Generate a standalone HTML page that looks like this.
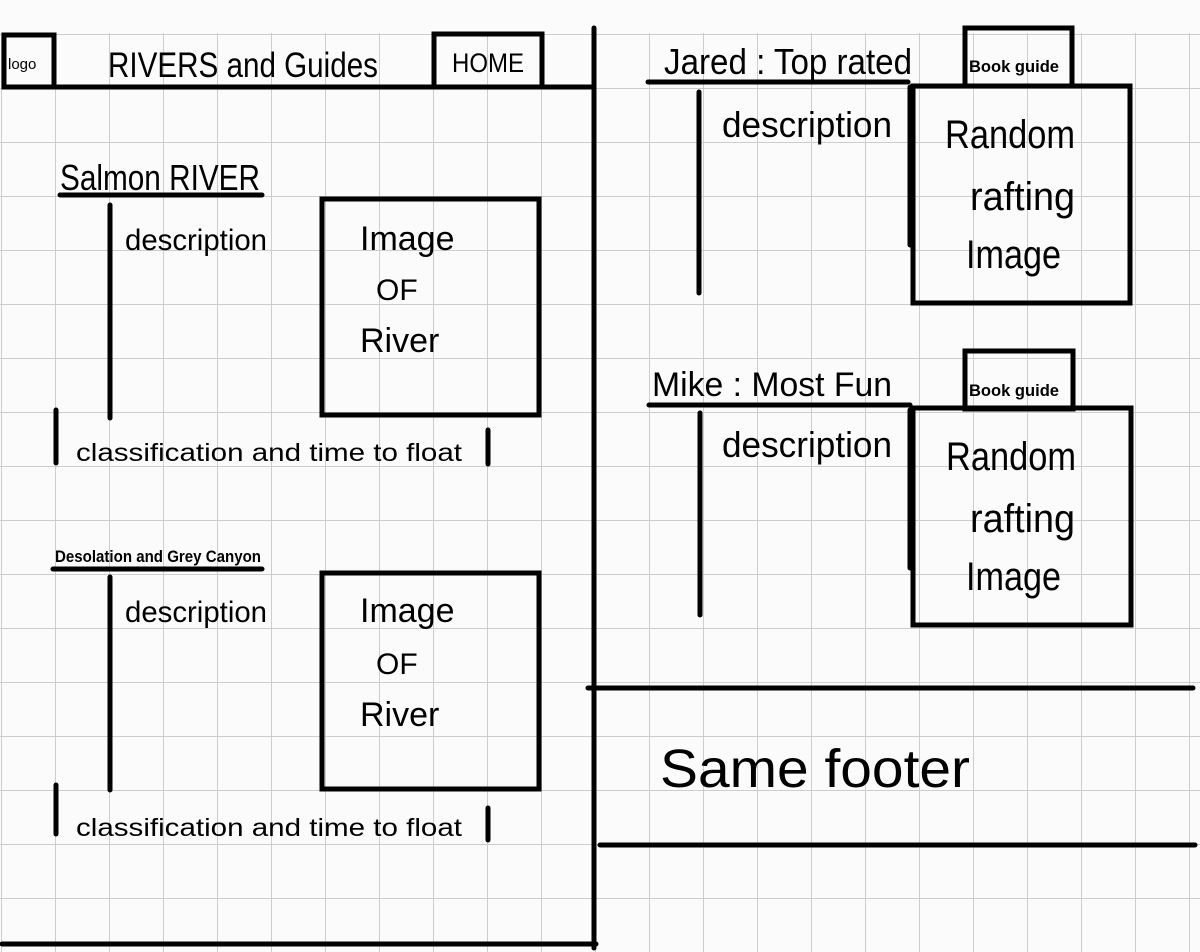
<!DOCTYPE html>
<html><head><meta charset="utf-8"><style>
html,body{margin:0;padding:0;background:#fbfbfb;}
svg{display:block}
text{font-family:"Liberation Sans",sans-serif;fill:#000;}
</style></head><body>
<svg width="1200" height="952" viewBox="0 0 1200 952" xmlns="http://www.w3.org/2000/svg">
<defs>
<pattern id="g" x="1" y="34" width="54" height="54" patternUnits="userSpaceOnUse">
<path d="M0 0V54M0 0H54" stroke="#cdcdcd" stroke-width="2" fill="none"/>
</pattern>
</defs>
<rect x="0" y="0" width="1200" height="952" fill="#fbfbfb"/>
<rect x="0" y="33" width="1200" height="919" fill="url(#g)"/>
<g stroke="#000" stroke-width="5" fill="none" stroke-linecap="round">
<!-- header -->
<rect x="4" y="35" width="50" height="52"/>
<line x1="54" y1="87" x2="593" y2="87"/>
<rect x="434" y="34" width="108" height="53"/>
<line x1="594" y1="28" x2="594" y2="948"/>
<line x1="2" y1="944" x2="596" y2="944"/>
<!-- salmon -->
<line x1="60" y1="195" x2="262" y2="195"/>
<line x1="110" y1="205" x2="110" y2="418"/>
<rect x="322" y="199" width="217" height="216"/>
<line x1="56" y1="410" x2="56" y2="463"/>
<line x1="488" y1="430" x2="488" y2="464"/>
<!-- desolation -->
<line x1="53" y1="569" x2="262" y2="569"/>
<line x1="110" y1="577" x2="110" y2="790"/>
<rect x="322" y="573" width="217" height="216"/>
<line x1="56" y1="785" x2="56" y2="834"/>
<line x1="488" y1="808" x2="488" y2="840"/>
<!-- jared -->
<line x1="648" y1="82" x2="908" y2="82"/>
<rect x="965" y="28" width="107" height="58"/>
<line x1="699" y1="92" x2="699" y2="293"/>
<line x1="910" y1="87" x2="910" y2="245"/>
<rect x="913" y="86" width="217" height="217"/>
<!-- mike -->
<line x1="649" y1="405" x2="910" y2="405"/>
<rect x="965" y="351" width="108" height="58"/>
<line x1="700" y1="413" x2="700" y2="615"/>
<line x1="910" y1="410" x2="910" y2="568"/>
<rect x="913" y="408" width="218" height="217"/>
<!-- footer -->
<line x1="588" y1="688" x2="1193" y2="688"/>
<line x1="600" y1="845" x2="1195" y2="845"/>
</g>
<text x="8" y="69" font-size="15">logo</text>
<text x="108" y="77" font-size="35" textLength="270" lengthAdjust="spacingAndGlyphs">RIVERS and Guides</text>
<text x="452" y="72" font-size="27" textLength="72" lengthAdjust="spacingAndGlyphs">HOME</text>
<text x="60" y="190" font-size="36" textLength="200" lengthAdjust="spacingAndGlyphs">Salmon RIVER</text>
<text x="125" y="250" font-size="30" textLength="142" lengthAdjust="spacingAndGlyphs">description</text>
<text x="360" y="250" font-size="34">Image</text>
<text x="376" y="300" font-size="30">OF</text>
<text x="360" y="352" font-size="34">River</text>
<text x="76" y="461" font-size="25" textLength="386" lengthAdjust="spacingAndGlyphs">classification and time to float</text>
<text x="55" y="562" font-size="17" font-weight="bold" textLength="206" lengthAdjust="spacingAndGlyphs">Desolation and Grey Canyon</text>
<text x="125" y="622" font-size="30" textLength="142" lengthAdjust="spacingAndGlyphs">description</text>
<text x="360" y="622" font-size="34">Image</text>
<text x="376" y="674" font-size="30">OF</text>
<text x="360" y="726" font-size="34">River</text>
<text x="76" y="836" font-size="25" textLength="386" lengthAdjust="spacingAndGlyphs">classification and time to float</text>
<text x="664" y="74" font-size="36" textLength="248" lengthAdjust="spacingAndGlyphs">Jared : Top rated</text>
<text x="969" y="72" font-size="17" font-weight="bold" textLength="90" lengthAdjust="spacingAndGlyphs">Book guide</text>
<text x="722" y="137" font-size="36" textLength="170" lengthAdjust="spacingAndGlyphs">description</text>
<text x="945" y="148" font-size="40" textLength="130" lengthAdjust="spacingAndGlyphs">Random</text>
<text x="970" y="210" font-size="40" textLength="105" lengthAdjust="spacingAndGlyphs">rafting</text>
<text x="966" y="268" font-size="40" textLength="95" lengthAdjust="spacingAndGlyphs">Image</text>
<text x="652" y="396" font-size="34" textLength="240" lengthAdjust="spacingAndGlyphs">Mike : Most Fun</text>
<text x="969" y="396" font-size="17" font-weight="bold" textLength="90" lengthAdjust="spacingAndGlyphs">Book guide</text>
<text x="722" y="457" font-size="36" textLength="170" lengthAdjust="spacingAndGlyphs">description</text>
<text x="946" y="470" font-size="40" textLength="130" lengthAdjust="spacingAndGlyphs">Random</text>
<text x="970" y="532" font-size="40" textLength="105" lengthAdjust="spacingAndGlyphs">rafting</text>
<text x="966" y="590" font-size="40" textLength="95" lengthAdjust="spacingAndGlyphs">Image</text>
<text x="660" y="787" font-size="54" textLength="310" lengthAdjust="spacingAndGlyphs">Same footer</text>
</svg>
</body></html>
